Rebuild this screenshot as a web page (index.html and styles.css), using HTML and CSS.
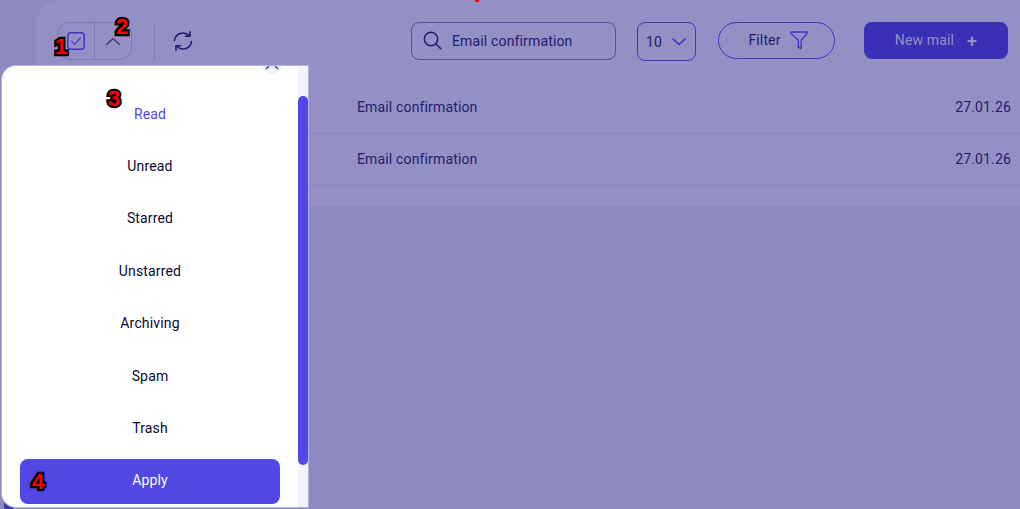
FILE: index.html
```html
<!DOCTYPE html>
<html lang="en">
<head>
    <meta charset="UTF-8">
    <meta name="viewport" content="width=device-width, initial-scale=1.0">
    <title>Mail</title>
    <link rel="stylesheet" href="styles.css">
</head>
<body>

    <div class="side"></div>

    <div class="main">
        <div class="panel">
            <!-- Toolbar -->
            <div class="toolbar">
                <div class="select-group">
                    <div class="select-cell">
                        <svg width="18" height="18" viewBox="0 0 18 18" fill="none" stroke="#3f37c0" stroke-width="1.5" stroke-linecap="round" stroke-linejoin="round">
                            <rect x="0.8" y="0.8" width="16.4" height="16.4" rx="3"/>
                            <path d="M4.5 9.2l3.2 3 5.800-6.200" stroke="#4d46c8" stroke-width="1.300"/>
                        </svg>
                    </div>
                    <div class="select-cell">
                        <svg width="16" height="9" viewBox="0 0 16 9" fill="none" stroke="#39347f" stroke-width="1.3" stroke-linecap="round" stroke-linejoin="round">
                            <path d="M1.5 7.5L8 1.5l6.5 6"/>
                        </svg>
                    </div>
                </div>
                <div class="divider"></div>
                <svg class="refresh" width="20" height="22" viewBox="0 0 20 22" fill="none" stroke="#221d6e" stroke-width="1.6" stroke-linecap="round" stroke-linejoin="round">
                    <path d="M1.5 10.5C1.8 6 5.4 3 9.8 3c2.6 0 4.8 1 6.4 3"/>
                    <path d="M17 1.8v4.4h-4.4"/>
                    <path d="M18.5 11.5c-.3 4.500-3.900 7.500-8.300 7.500-2.600 0-4.800-1-6.400-3"/>
                    <path d="M3 20.200v-4.400h4.400"/>
                </svg>

                <div class="search">
                    <svg width="19" height="19" viewBox="0 0 19 19" fill="none" stroke="#221d6e" stroke-width="1.5" stroke-linecap="round">
                        <circle cx="8" cy="8" r="6.700"/>
                        <path d="M13 13l4.800 4.800"/>
                    </svg>
                    <span>Email confirmation</span>
                </div>

                <div class="per-page">
                    <span>10</span>
                    <svg width="14" height="8" viewBox="0 0 14 8" fill="none" stroke="#3f37c0" stroke-width="1.600" stroke-linecap="round" stroke-linejoin="round">
                        <path d="M1 1.200l6 5.300 6-5.300"/>
                    </svg>
                </div>

                <div class="filter">
                    <span>Filter</span>
                    <svg width="18" height="19" viewBox="0 0 18 19" fill="none" stroke="#3f37c0" stroke-width="1.400" stroke-linejoin="round">
                        <path d="M1 1h16v1.500l-5.800 6.700v8.300l-2.800-1.200V9.200L1 2.500z"/>
                    </svg>
                </div>

                <div class="new-mail">
                    <span>New mail</span>
                    <span class="plus">+</span>
                </div>
            </div>

            <!-- Lista de emails -->
            <div class="mail-row">
                <span>Email confirmation</span>
                <span>27.01.26</span>
            </div>
            <div class="mail-row">
                <span>Email confirmation</span>
                <span>27.01.26</span>
            </div>
        </div>
    </div>

    <div class="menu-under"></div>

    <!-- Menu de acoes -->
    <div class="menu">
        <div class="menu-list">
            <div class="menu-close">
                <svg width="14" height="6" viewBox="0 0 14 6" fill="none" stroke="#39347f" stroke-width="1.300">
                    <path d="M1 5l3-3M13 5l-3-3"/>
                </svg>
            </div>
            <div class="menu-item active">Read</div>
            <div class="menu-item">Unread</div>
            <div class="menu-item">Starred</div>
            <div class="menu-item">Unstarred</div>
            <div class="menu-item">Archiving</div>
            <div class="menu-item">Spam</div>
            <div class="menu-item">Trash</div>
            <div class="menu-apply">Apply</div>
        </div>
        <div class="menu-scroll">
            <div class="menu-thumb"></div>
        </div>
    </div>

    <!-- Marcas de anotacao -->
    <span class="mark mark-1">1</span>
    <span class="mark mark-2">2</span>
    <span class="mark mark-3">3</span>
    <span class="mark mark-4">4</span>
    <span class="speck"></span>

</body>
</html>
```

FILE: styles.css
```css
/* Estilos gerais */
html, body {
    height: 100%;
}

body {
    margin: 0;
    display: flex;
    overflow: hidden;
    position: relative;
    background-color: #8d89c1;
    color: #221d6e;
    font-family: Roboto, "Liberation Sans", sans-serif;
    font-size: 14px;
    letter-spacing: 0.15px;
}

.side {
    width: 36px;
    flex-shrink: 0;
}

.main {
    flex: 1;
}

.panel {
    height: 206px;
    background-color: #948fc4;
    border-top-left-radius: 24px;
}

/* Toolbar */
.toolbar {
    display: flex;
    align-items: flex-start;
    height: 82px;
    padding: 22px 12px 0 21px;
    box-sizing: border-box;
}

.select-group {
    display: flex;
    width: 75px;
    height: 38px;
    box-sizing: border-box;
    border: 1px solid #7e79b5;
    border-radius: 12px;
}

.select-cell {
    flex: 1;
    display: flex;
    align-items: center;
    justify-content: center;
}

.select-cell + .select-cell {
    border-left: 1px solid #7e79b5;
}

.divider {
    width: 1px;
    height: 36px;
    margin: 1px 18px 0 22px;
    background-color: #7e79b5;
}

.refresh {
    margin-top: 8px;
}

.search {
    display: flex;
    align-items: center;
    gap: 10px;
    width: 205px;
    height: 38px;
    margin-left: 218px;
    padding: 0 0 1px 11px;
    box-sizing: border-box;
    border: 1px solid #56519c;
    border-radius: 8px;
}

.per-page {
    display: flex;
    align-items: center;
    gap: 10px;
    width: 59px;
    height: 39px;
    margin-left: 21px;
    padding-left: 8px;
    box-sizing: border-box;
    border: 1px solid #3f37c0;
    border-radius: 8px;
}

.filter {
    display: flex;
    align-items: center;
    justify-content: center;
    gap: 9px;
    width: 117px;
    height: 37px;
    margin-left: 22px;
    padding: 0 0 1px 3px;
    box-sizing: border-box;
    border: 1px solid #3f37c0;
    border-radius: 19px;
}

.new-mail {
    display: flex;
    align-items: center;
    justify-content: center;
    gap: 13px;
    width: 144px;
    height: 37px;
    margin-left: 29px;
    padding-bottom: 1px;
    box-sizing: border-box;
    border-radius: 8px;
    background-color: #3a30b5;
    color: #948fc4;
}

.plus {
    font-size: 18px;
    font-weight: 500;
}

/* Linhas */
.mail-row {
    display: flex;
    justify-content: space-between;
    align-items: center;
    height: 52px;
    padding: 0 9px 1px 321px;
    box-sizing: border-box;
    border-bottom: 1px solid #8a85bc;
}

/* Menu */
.menu {
    position: absolute;
    left: 2px;
    top: 66px;
    width: 306px;
    height: 441px;
    display: flex;
    overflow: hidden;
    background-color: #fff;
    border-radius: 14px 0 0 14px;
    box-shadow: 0 0 0 1px #b5b2dc;
}

.menu-under {
    position: absolute;
    left: 4px;
    top: 497px;
    width: 9px;
    height: 12px;
    background-color: #4038b8;
}

.menu-list {
    flex: 1;
    display: flex;
    flex-direction: column;
    align-items: stretch;
    padding: 0 18px;
    position: relative;
}

.menu-close {
    position: absolute;
    top: -14px;
    right: 15px;
    width: 22px;
    height: 22px;
    box-sizing: border-box;
    display: flex;
    align-items: flex-end;
    justify-content: center;
    padding-bottom: 4px;
    border-radius: 50%;
    background-color: #f1f4fa;
}

.menu-item {
    height: 52.4px;
    display: flex;
    align-items: center;
    justify-content: center;
    color: #0c0a33;
}

.menu-item.active {
    margin-top: 21.4px;
    color: #5047e5;
}

.menu-apply {
    height: 45px;
    margin-top: 4.6px;
    display: flex;
    align-items: center;
    justify-content: center;
    padding-bottom: 2px;
    box-sizing: border-box;
    border-radius: 8px;
    background-color: #5047e5;
    color: #fff;
}

.menu-scroll {
    width: 10px;
    padding-top: 30px;
    background-color: #f1f4fa;
}

.menu-thumb {
    height: 369px;
    border-radius: 5px;
    background-color: #5047e5;
}

/* Marcas */
.mark {
    position: absolute;
    color: #f00;
    font-family: "Liberation Sans", sans-serif;
    font-size: 22px;
    font-weight: 700;
    line-height: 22px;
    letter-spacing: 0;
    -webkit-text-stroke: 4.5px #000;
    paint-order: stroke fill;
}

.mark-1 { left: 55px; top: 36px; }
.mark-2 { left: 116px; top: 16px; }
.mark-3 { left: 108px; top: 88px; }
.mark-4 { left: 32px; top: 471px; }

.speck {
    position: absolute;
    left: 475px;
    top: 0;
    width: 4px;
    height: 2px;
    background-color: #f00;
}
```
